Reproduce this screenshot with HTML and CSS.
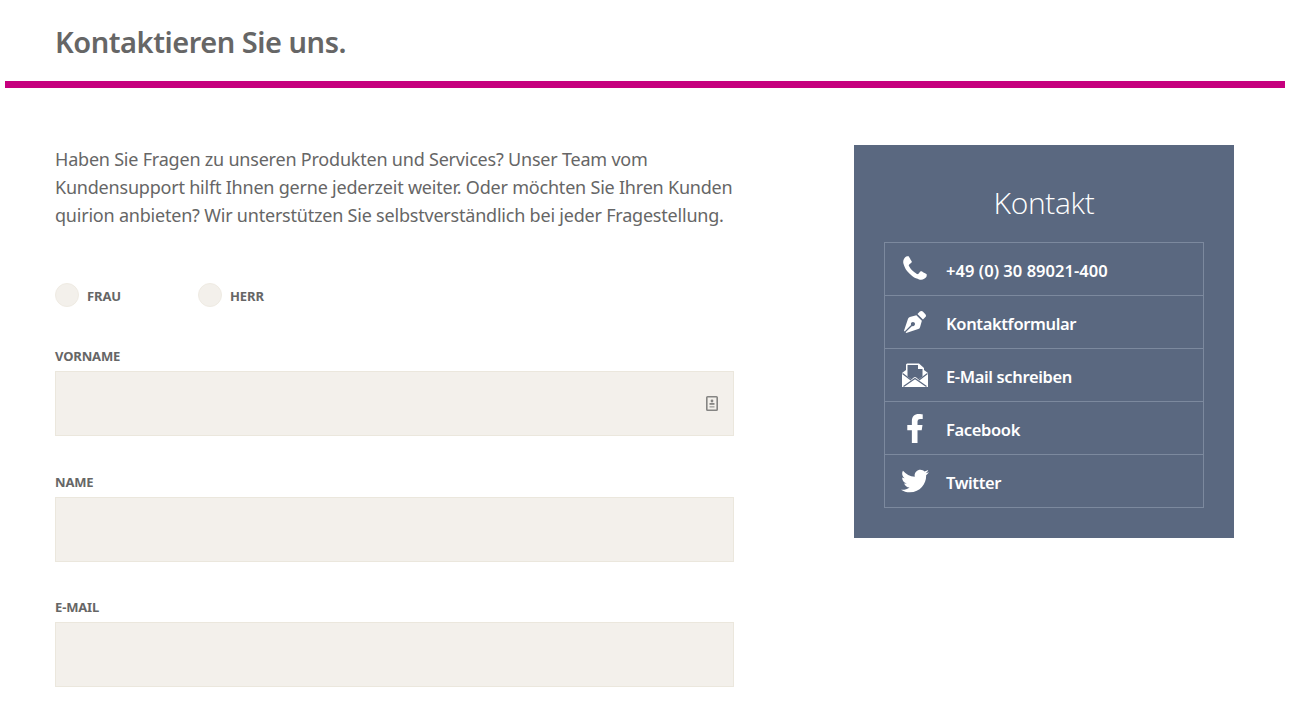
FILE: index.html
```html
<!DOCTYPE html>
<html lang="de">
<head>
<meta charset="utf-8">
<title>Kontakt</title>
<link rel="stylesheet" href="styles.css">
</head>
<body>
<header class="head">
  <h1 class="title">Kontaktieren Sie uns.</h1>
</header>
<main class="content">
  <section class="form-col">
    <p class="intro">Haben Sie Fragen zu unseren Produkten und Services? Unser Team vom Kundensupport hilft Ihnen gerne jederzeit weiter. Oder möchten Sie Ihren Kunden quirion anbieten? Wir unterstützen Sie selbstverständlich bei jeder Fragestellung.</p>
    <div class="radios">
      <label class="radio"><span class="dot"></span><span class="radio-text">FRAU</span></label>
      <label class="radio"><span class="dot"></span><span class="radio-text">HERR</span></label>
    </div>
    <div class="field">
      <label class="lbl">VORNAME</label>
      <div class="input">
        <svg class="card" viewBox="0 0 12 15" width="12" height="15"><rect x=".8" y=".8" width="10.4" height="13.4" rx=".8" fill="none" stroke="#858583" stroke-width="1.6"/><circle cx="6" cy="5" r="1.4" fill="#858583"/><rect x="3.5" y="7" width="5" height="1.8" fill="#858583"/><rect x="3.5" y="10" width="5" height="1.6" fill="#aeaeab"/></svg>
      </div>
    </div>
    <div class="field">
      <label class="lbl">NAME</label>
      <div class="input"></div>
    </div>
    <div class="field">
      <label class="lbl">E-MAIL</label>
      <div class="input"></div>
    </div>
  </section>
  <aside class="panel">
    <h2 class="panel-title">Kontakt</h2>
    <ul class="links">
      <li class="link"><span class="ico"><svg viewBox="0 0 1792 1792" width="30" height="30"><path fill="#fff" d="M1600 1240q0 27-10 70.5t-21 68.5q-21 50-122 106-94 51-186 51-27 0-53-3.5t-57.5-12.5-47-14.5-55.5-20.5-49-18q-98-35-175-83-127-79-264-216t-216-264q-48-77-83-175-3-9-18-49t-20.5-55.5-14.5-47-12.5-57.5-3.5-53q0-92 51-186 56-101 106-122 25-11 68.5-21t70.5-10q14 0 21 3 18 6 53 76 11 19 30 54t35 63.5 31 53.5q3 4 17.5 25t21.5 35.5 7 28.5q0 20-28.5 50t-62 55-62 53-28.5 46q0 9 5 22.5t8.5 20.5 14 24 11.5 19q76 137 174 235t235 174q2 1 19 11.500t24 14 20.5 8.500 22.5 5q18 0 46-28.500t53-62 55-62 50-28.500q14 0 28.500 7t35.500 21.500 25 17.500q25 15 53.500 31t63.500 35 54 30q70 35 76 53 3 7 3 21z"/></svg></span><span class="txt phone">+49 (0) 30 89021-400</span></li>
      <li class="link"><span class="ico"><svg viewBox="0 0 512 512" width="22" height="22"><path fill="#fff" d="M136.6 138.79a64.003 64.003 0 0 0-43.31 41.35L0 460l14.69 14.69L164.8 324.58c-2.99-6.26-4.8-13.18-4.8-20.58 0-26.51 21.49-48 48-48s48 21.49 48 48-21.49 48-48 48c-7.4 0-14.32-1.81-20.58-4.8L37.31 497.31 52 512l279.86-93.29a64.003 64.003 0 0 0 41.35-43.31L416 224 288 96l-151.4 42.79zm361.34-64.62l-60.11-60.11c-18.75-18.75-49.16-18.75-67.91 0l-56.55 56.55 128.02 128.02 56.55-56.55c18.75-18.75 18.75-49.15 0-67.91z"/></svg></span><span class="txt">Kontaktformular</span></li>
      <li class="link"><span class="ico"><svg viewBox="0 0 26 26" width="26" height="26"><path fill="#fff" d="M0 11 4 8V2.5L5 1.5H17L22 6V8L26 11V25H0Z"/><path fill="#5a6880" d="M5.500 3H16V7H20.500V14.500L16.500 17.500C15 16 14 15 13 15S11 16 9.500 17.500L5.500 14.500Z"/><path fill="none" stroke="#5a6880" stroke-width="1.300" d="M.5 11.500 9 18M25.500 11.500 17 18M1.500 24.500 13 16.500 24.500 24.500"/></svg></span><span class="txt">E-Mail schreiben</span></li>
      <li class="link"><span class="ico"><svg viewBox="0 0 320 512" width="18" height="29"><path fill="#fff" d="M279.14 288l14.22-92.66h-88.91v-60.13c0-25.35 12.42-50.06 52.24-50.06h40.42V6.26S260.43 0 225.36 0c-73.22 0-121.08 44.38-121.08 124.72v70.62H22.89V288h81.39v224h100.17V288z"/></svg></span><span class="txt">Facebook</span></li>
      <li class="link"><span class="ico"><svg viewBox="0 0 512 512" width="28" height="28"><path fill="#fff" d="M459.37 151.716c.325 4.548.325 9.097.325 13.645 0 138.72-105.583 298.558-298.558 298.558-59.452 0-114.68-17.219-161.137-47.106 8.447.974 16.568 1.299 25.34 1.299 49.055 0 94.213-16.568 130.274-44.832-46.132-.975-84.792-31.188-98.112-72.772 6.498.974 12.995 1.624 19.818 1.624 9.421 0 18.843-1.3 27.614-3.573-48.081-9.747-84.143-51.98-84.143-102.985v-1.299c13.969 7.797 30.214 12.67 47.431 13.319-28.264-18.843-46.781-51.005-46.781-87.391 0-19.492 5.197-37.36 14.294-52.954 51.655 63.675 129.3 105.258 216.365 109.807-1.624-7.797-2.599-15.918-2.599-24.04 0-57.828 46.782-104.934 104.934-104.934 30.213 0 57.502 12.67 76.67 33.137 23.715-4.548 46.456-13.32 66.599-25.34-7.798 24.366-24.366 44.833-46.132 57.827 21.117-2.273 41.584-8.122 60.426-16.243-14.292 20.791-32.161 39.308-52.628 54.253z"/></svg></span><span class="txt">Twitter</span></li>
    </ul>
  </aside>
</main>
</body>
</html>
```
FILE: styles.css
```css
* { box-sizing: border-box; }
html, body { margin: 0; padding: 0; }
body {
  background: #fff;
  color: #666;
  font-family: "Noto Sans", "Open Sans", sans-serif;
  height: 706px;
  overflow: hidden;
}
.head {
  margin: 0 5px;
  height: 88px;
  border-bottom: 7px solid #c6007e;
  padding: 23px 0 0 50px;
}
.title {
  margin: 0;
  font-size: 29px;
  line-height: 38px;
  font-weight: 600;
  letter-spacing: -.47px;
  color: #666;
}
.content {
  display: flex;
  padding: 57px 0 0 55px;
}
.form-col { width: 679px; }
.intro {
  margin: 0 -10px 0 0;
  font-size: 18px;
  line-height: 28px;
  letter-spacing: -.21px;
}
.radios {
  display: flex;
  margin-top: 54px;
  height: 24px;
}
.radio {
  display: flex;
  align-items: center;
  width: 143px;
  font-size: 13px;
  font-weight: 700;
  letter-spacing: -.1px;
}
.radio-text { padding-top: 2px; }
.dot {
  width: 24px;
  height: 24px;
  border-radius: 50%;
  background: #f3f0eb;
  border: 1px solid #efebe3;
  margin-right: 8px;
}
.field { margin-top: 35.5px; }
.radios + .field { margin-top: 39px; }
.lbl {
  display: block;
  font-size: 13px;
  line-height: 18px;
  font-weight: 700;
  letter-spacing: -.15px;
  padding-top: 1px;
  margin-bottom: 6px;
  height: 19px;
}
.input {
  height: 65px;
  background: #f3f0eb;
  border: 1px solid #ebe7dd;
  display: flex;
  align-items: center;
  justify-content: flex-end;
  padding: 0 15px 0 0;
}
.card { display: block; }
.panel {
  margin-left: 120px;
  width: 380px;
  height: 393px;
  flex: none;
  background: #5a6880;
  padding: 38px 30px 0;
  color: #fff;
}
.panel-title {
  margin: 0 0 19px;
  text-align: center;
  font-size: 30px;
  line-height: 40px;
  font-weight: 300;
  font-family: "Open Sans", "Noto Sans", sans-serif;
  letter-spacing: -.33px;
}
.links {
  list-style: none;
  margin: 0;
  padding: 0;
  border: 1px solid #7c899e;
  border-bottom: 0;
}
.link {
  display: flex;
  align-items: center;
  height: 53px;
  border-bottom: 1px solid #7c899e;
  font-size: 16.5px;
  font-weight: 600;
  letter-spacing: -.36px;
}
.ico {
  width: 61px;
  flex: none;
  display: flex;
  justify-content: center;
  padding-right: 2px;
}
.ico svg { display: block; }
.txt { padding-top: 2px; }
.phone { letter-spacing: .04px; }
```
